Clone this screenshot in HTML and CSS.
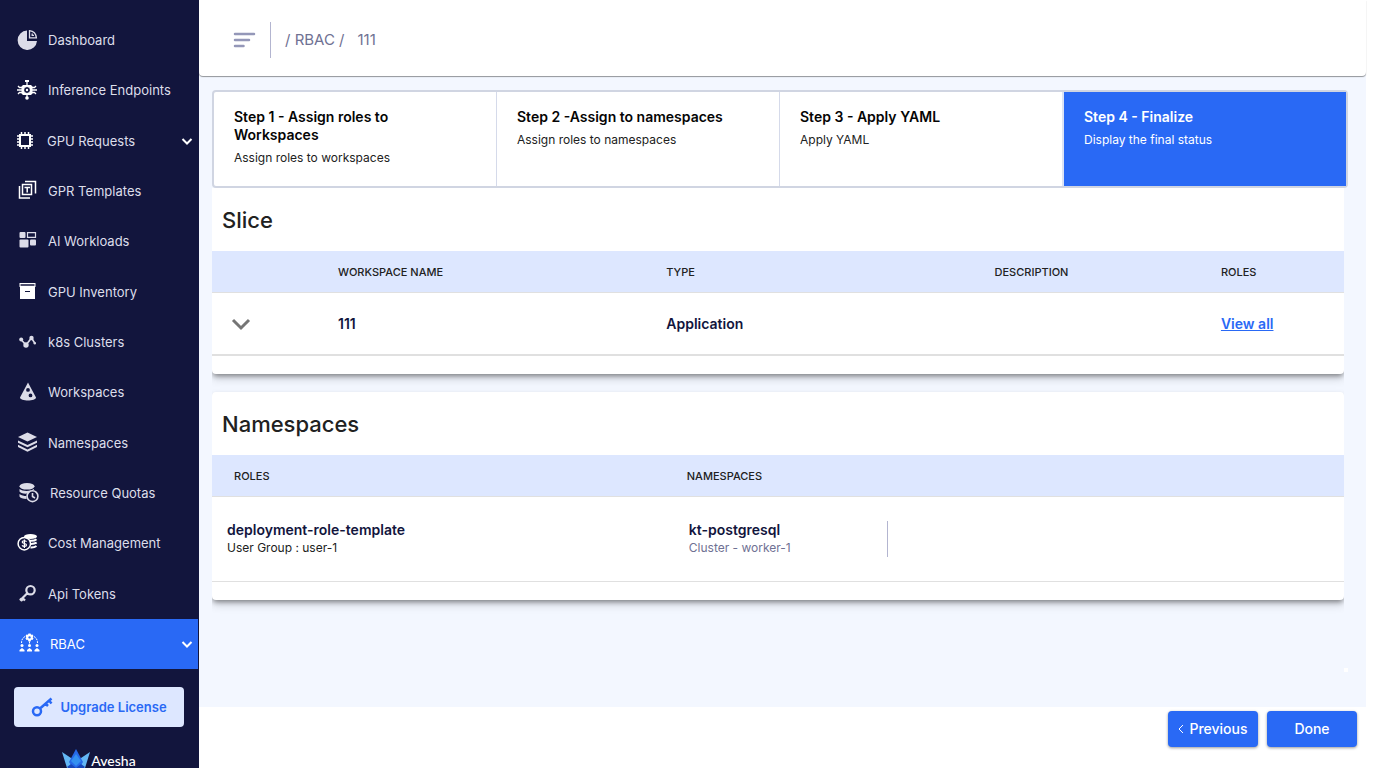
FILE: index.html
```html
<!DOCTYPE html>
<html lang="en">
<head>
<meta charset="utf-8">
<title>RBAC</title>
<link rel="stylesheet" href="styles.css">
</head>
<body>
<div class="app">
  <aside class="sidebar">
    <nav class="nav">
      <a class="nav-item" href="#"><svg class="icon dim" viewBox="0 0 22 22"><path d="M11 1.500A9.700 9.700 0 1 0 21 12H11z"/><path class="line" stroke-width="1.300" d="M13.500 1.600V8.900H20.400C20 4.500 17.500 2 13.500 1.600zM16.200 4.500V6.300H18"/></svg><span>Dashboard</span></a>
      <a class="nav-item" href="#"><svg class="icon" viewBox="0 0 22 22"><rect x="9" y="1" width="4" height="2"/><circle cx="11" cy="19" r="1.800"/><path class="line" stroke-width="1.300" d="M11 3v3M11 16v3M6 8.500H3.500L2 7M6 11H1M6 13.500H3.500L2 15M16 8.500h2.500L20 7M16 11h5M16 13.500h2.500L20 15"/><path fill-rule="evenodd" d="M7 6h8l1.500 1.500v7L15 16H7l-1.500-1.500v-7zM11 7.800l1 .8 1.400.2.1 1.400.7.8-.7.900-.1 1.300-1.400.2-1 .8-1-.8-1.400-.2-.1-1.300-.7-.9.7-.8.1-1.400 1.400-.2z"/><circle cx="11" cy="11" r="1.200"/></svg><span>Inference Endpoints</span></a>
      <a class="nav-item tight" href="#"><svg class="icon" viewBox="0 0 22 22"><path class="line" stroke-width="2" d="M4 5h10v11h-10z"/><path class="line" stroke-width="1.500" d="M5.500 2v3M9 2v3M12.500 2v3M5.500 16v3M9 16v3M12.500 16v3M1 6h3M1 9h3M1 12h3M1 15h3M14 6h3M14 9h3M14 12h3M14 15h3"/></svg><span>GPU Requests</span><svg class="chev" viewBox="0 0 12 12"><path d="M1.500 4l4.500 4.500L10.500 4"/></svg></a>
      <a class="nav-item" href="#"><svg class="icon" viewBox="0 0 22 22"><path class="line" stroke-width="1.500" d="M6.500 4.500h9v10h-9zM9 1.500H19.500V13.500M3.500 6V18H14"/><path class="line" stroke-width="1.500" d="M8.500 7.500h5.500M11.200 7.500v5"/></svg><span>GPR Templates</span></a>
      <a class="nav-item" href="#"><svg class="icon dim" viewBox="0 0 22 22"><rect x="3.500" y="2" width="6" height="6" rx="1"/><rect x="3.500" y="9.500" width="9" height="8" rx="1"/><rect x="14" y="9.500" width="6" height="6" rx="1"/><path class="line" stroke-width="1.200" d="M11.500 2.700h8v4.600h-8z"/></svg><span>AI Workloads</span></a>
      <a class="nav-item" href="#"><svg class="icon" viewBox="0 0 22 22"><path fill-rule="evenodd" d="M3.500 2h16v4h-16zM4.500 3.300v1.400h14V3.300z"/><path fill-rule="evenodd" d="M4 6h15v12h-15zM9 10v1h5v-1z"/></svg><span>GPU Inventory</span></a>
      <a class="nav-item" href="#"><svg class="icon dim" viewBox="0 0 22 22"><path class="line" stroke-width="1.600" d="M5 8.500l5 5.500L15.500 7l3.500 5.500"/><circle cx="5.200" cy="8.500" r="2"/><circle cx="10" cy="14" r="2.700"/><circle cx="15.500" cy="7" r="2.200"/><circle cx="18.800" cy="12.300" r="1.200"/></svg><span>k8s Clusters</span></a>
      <a class="nav-item" href="#"><svg class="icon dim" viewBox="0 0 22 22"><path fill-rule="evenodd" d="M12 1.500L4 16.500C4 20.500 20 20.500 20 16.500zM12 7a1.900 1.900 0 1 1 0 3.800a1.900 1.900 0 1 1 0-3.800zM14.500 12.500a1.900 1.900 0 1 1 0 3.800a1.900 1.900 0 1 1 0-3.800z"/></svg><span>Workspaces</span></a>
      <a class="nav-item" href="#"><svg class="icon dim" viewBox="0 0 22 22"><path d="M11.500 0.500L2 5 11.500 9.500l9.500-4.500z"/><path d="M2 8.500L11.500 13l9.500-4.500v2.200L11.500 15.300l-9.500-4.600z"/><path d="M2 12.800L11.500 17.400l9.500-4.600v2.200L11.500 19.700l-9.500-4.700z"/></svg><span>Namespaces</span></a>
      <a class="nav-item loose" href="#"><svg class="icon dim" viewBox="0 0 22 22"><ellipse cx="8" cy="4.300" rx="7.500" ry="3.300"/><path d="M.5 7c3 2.500 11 2.500 14.500 0v1c-4 .5-6 2-6.500 3.500C5 12 1 11 .5 9.500zM.5 12c2 1.500 4.500 2 7 2v3C4 17 1 16 .5 14.500z"/><path class="line" stroke-width="1.600" d="M13.500 8.800a5.400 5.400 0 1 1 0 10.800a5.400 5.400 0 1 1 0-10.800zM13.500 11v3.500l2.500 1.500"/></svg><span>Resource Quotas</span></a>
      <a class="nav-item" href="#"><svg class="icon" viewBox="0 0 22 22"><ellipse cx="14.500" cy="4.500" rx="6.500" ry="2.500"/><path class="line" stroke-width="2" d="M13.500 8.800c3 .2 6-.5 7-1.500M15 12c2.500 0 4.500-.6 5.700-1.300M14.500 15.500c3 .2 5-.7 6-1.500"/><path class="line" stroke-width="1.500" d="M8.300 5.500a6.200 6.200 0 1 1 0 12.400a6.200 6.200 0 1 1 0-12.400z"/><path class="line" stroke-width="1.200" d="M10.500 9.700c-.8-1.300-4.300-1.300-4.300.3 0 2 4.300 1 4.300 3 0 1.700-3.500 1.700-4.500.3M8.400 7.600v8.400"/></svg><span>Cost Management</span></a>
      <a class="nav-item" href="#"><svg class="icon dim" viewBox="0 0 22 22"><path class="line" stroke-width="2.200" d="M14.500 3a4.200 4.200 0 1 1 0 8.400a4.200 4.200 0 1 1 0-8.400zM11.500 10L4 17.500M6.500 15l2.500 2.500M4 15.500l2.500 2.500"/></svg><span>Api Tokens</span></a>
      <a class="nav-item loose active" href="#"><svg class="icon" viewBox="0 0 22 22"><path fill-rule="evenodd" d="M9.500 .5h2l.6 1.200 1.400-.3 1 1.600-.8 1.200.8 1.300-1 1.500-1.400-.2L11.500 8.500h-2l-.6-1.700-1.400.2-1-1.500.8-1.300-.8-1.200 1-1.600 1.400.3zM10.500 3.200a1.200 1.200 0 1 0 .1 0z"/><path class="line" stroke-dasharray="2 1" stroke-width="1" d="M6 3.500C3.500 5 2.500 7 2.500 10M15 3.500C17.500 5 18.500 7 18.500 10M10.500 8.500v3"/><circle cx="3" cy="12.500" r="1.500"/><circle cx="10.500" cy="12.500" r="1.500"/><circle cx="18" cy="12.500" r="1.500"/><path d="M.5 18.500v-1.500L3 15l2.500 2v1.500zM8 18.500v-1.500l2.500-2 2.500 2v1.500zM15.500 18.500v-1.500l2.500-2 2.500 2v1.500z"/></svg><span>RBAC</span><svg class="chev" viewBox="0 0 12 12"><path d="M1.500 4l4.500 4.500L10.500 4"/></svg></a>
    </nav>
    <div class="sidebar-foot">
      <button class="upgrade" type="button"><svg viewBox="0 0 22 20"><path d="M6 10.200a4 4 0 1 1 0 8a4 4 0 1 1 0-8zM9 11.500L20.500 1.500M14.500 6.500l2.500 2.500M18 3.500l2.500 3"/></svg>Upgrade License</button>
      <div class="brand"><svg viewBox="0 0 28 26"><path fill="#63b7f5" d="M0 3l9 6 2 14-6-4zM28 3l-9 6-2 14 6-4z"/><path fill="#2668e8" d="M14 0L7 13l7 11 7-11z"/><path fill="#3390f0" d="M14 5L9 12l5 5 5-5z"/><path fill="#1746b8" d="M5 18l9 8 9-8-4-3-5 4-5-4z"/></svg><span>Avesha</span></div>
    </div>
  </aside>
  <div class="page">
    <header class="topbar">
      <button class="menu" type="button" aria-label="Toggle menu"><svg viewBox="0 0 24 18"><path d="M3 3h19M3 9h14M3 15h8.500"/></svg></button>
      <div class="crumbs"><span>/ <a href="#">RBAC</a> /</span><span>111</span></div>
    </header>
    <main class="content">
      <ol class="steps">
        <li class="step"><h3>Step 1 - Assign roles to Workspaces</h3><p>Assign roles to workspaces</p></li>
        <li class="step"><h3>Step 2 -Assign to namespaces</h3><p>Assign roles to namespaces</p></li>
        <li class="step"><h3>Step 3 - Apply YAML</h3><p>Apply YAML</p></li>
        <li class="step current"><h3>Step 4 - Finalize</h3><p>Display the final status</p></li>
      </ol>
      <div class="cards">
        <section class="card joined">
          <h2>Slice</h2>
          <table class="slice">
            <thead><tr><th class="c-toggle"></th><th class="c-wide">Workspace name</th><th class="c-wide">Type</th><th class="c-desc">Description</th><th>Roles</th></tr></thead>
            <tbody><tr><td><button class="expand" type="button" aria-label="Expand row"><svg viewBox="0 0 20 14"><path d="M2 3l8 8 8-8"/></svg></button></td><td>111</td><td>Application</td><td></td><td><a href="#">View all</a></td></tr></tbody>
          </table>
        </section>
        <section class="card">
          <h2>Namespaces</h2>
          <table class="names">
            <thead><tr><th class="c-role">Roles</th><th>Namespaces</th></tr></thead>
            <tbody><tr><td class="role"><strong>deployment-role-template</strong><p>User Group : user-1</p></td><td class="ns"><div class="ns-item"><strong>kt-postgresql</strong><p>Cluster - worker-1</p></div></td></tr></tbody>
          </table>
        </section>
      </div>
    </main>
    <footer class="actions">
      <button class="btn" type="button"><svg viewBox="0 0 6 10"><path d="M5 1L1 5l4 4"/></svg>Previous</button>
      <button class="btn" type="button">Done</button>
    </footer>
  </div>
</div>
</body>
</html>
```

FILE: styles.css
```css
* { box-sizing: border-box; }
body, h2, h3, p, ol { margin: 0; padding: 0; }
body {
  font-family: Inter, "Liberation Sans", sans-serif;
  font-size: 13px;
  line-height: 18px;
  color: #212121;
  background: #fff;
}
button { font: inherit; border: 0; background: none; padding: 0; cursor: pointer; }
a { color: inherit; text-decoration: none; }
svg { flex: none; display: block; }

.app { display: flex; height: 100vh; padding: 0 32px 14px 0; }

.sidebar { flex: 0 0 199px; display: flex; flex-direction: column; background: #12153d; overflow: hidden; }
.nav { flex: 1; display: flex; flex-direction: column; justify-content: space-between; padding: 15px 1px 0 0; }
.nav-item { flex: 0 0 50px; display: flex; align-items: center; gap: 10px; padding: 0 5px 0 16px; color: #dddeea; }
.nav-item.tight { gap: 9px; }
.nav-item.loose { padding-left: 19px; gap: 9px; }
.nav-item.active { background: #2969f5; color: #fff; }
.icon { width: 22px; height: 22px; fill: #fff; }
.icon.dim { fill: #dcdce8; }
.icon .line { fill: none; stroke: #fff; }
.icon.dim .line { stroke: #dcdce8; }
.chev { width: 12px; height: 12px; margin-left: auto; fill: none; stroke: #fff; stroke-width: 2; }

.sidebar-foot { flex: 0 0 99px; padding: 18px 15px 0 14px; overflow: hidden; }
.upgrade {
  width: 100%; height: 40px; display: flex; align-items: center; justify-content: center; gap: 7px;
  background: #dde7ff; color: #2969f5; border-radius: 4px; font-weight: 600;
}
.upgrade svg { width: 22px; height: 20px; fill: none; stroke: #2969f5; stroke-width: 2.500; }
.brand { display: flex; justify-content: center; gap: 1px; margin-top: 22px; color: #fff; font: 500 14px/24px Lato, sans-serif; }
.brand svg { width: 28px; height: 26px; }

.page { flex: 1; min-width: 0; display: flex; flex-direction: column; background: #f3f7ff; }
.topbar {
  flex: 0 0 76px; display: flex; align-items: center; padding: 4px 0 0 33px; background: #fff;
  border-radius: 0 0 4px 4px; box-shadow: 0 1px 1px rgba(0, 0, 0, .4); color: #6f7193; font-size: 15px;
}
.menu { padding-right: 14px; height: 36px; border-right: 1px solid #b3b5d0; }
.menu svg { width: 24px; height: 18px; stroke: #9497b8; stroke-width: 2.500; stroke-linecap: round; }
.crumbs { display: flex; gap: 13px; padding-left: 14px; }

.content { flex: 1; min-height: 0; padding: 14px 18px 35px 13px; display: flex; flex-direction: column; }
.steps { flex: none; display: flex; min-height: 98px; list-style: none; background: #fff; border: 2px solid #d0d5e2; border-radius: 4px; }
.step { flex: 1; padding: 16px 40px 16px 20px; border-left: 1px solid #d5daea; }
.step:first-child { border-left: 0; }
.step h3 { font-size: 14px; line-height: 18px; font-weight: 600; color: #050505; }
.step p { margin-top: 5px; font-size: 12px; }
.step.current { background: #2969f5; border-left: 2px solid #dbe3f5; }
.step.current h3, .step.current p { color: #fff; }

.cards { flex: 1; position: relative; padding-right: 4px; overflow: hidden; }
.cards::after { content: ""; position: absolute; right: 0; bottom: 0; width: 4px; height: 4px; background: #fff; }
.card { background: #fff; border-radius: 4px; padding-bottom: 18px; margin-bottom: 18px; clip-path: inset(-4px 0 -18px 0); box-shadow: 0 3px 5px -1px rgba(0, 0, 0, .4), 0 5px 10px rgba(0, 0, 0, .14); }
.card.joined { border-radius: 0 0 4px 4px; }
.card h2 { padding: 17px 10px 16px; font-size: 22px; line-height: 30px; font-weight: 500; }
table { width: 100%; border-collapse: separate; border-spacing: 0; table-layout: fixed; }
th { height: 42px; padding: 0 22px; text-align: left; text-transform: uppercase; font-size: 11px; font-weight: 500; background: #dde7ff; border-bottom: 1px solid #e0e0e0; }
td { padding: 0 22px; }
.slice td { height: 63px; border-bottom: 2px solid #e0e0e0; color: #12153d; font-size: 14px; font-weight: 600; }
.slice td a { color: #2969f5; text-decoration: underline; }
.c-toggle { width: 104px; }
.c-wide { width: 29%; }
.c-desc { width: 20%; }
.c-role { width: 40%; }
.expand { display: block; margin-left: -3px; }
.expand svg { width: 20px; height: 14px; fill: none; stroke: #757575; stroke-width: 3; }
.names td { height: 85px; border-bottom: 1px solid #e0e0e0; }
.names strong { display: block; font-size: 14px; font-weight: 600; color: #12153d; }
.names p { font-size: 12px; }
.names .role { padding-left: 15px; }
.names .ns { padding-left: 24px; }
.ns-item { width: 199px; border-right: 1px solid #b3b5d0; }
.ns-item p { color: #6f7193; }

.actions { flex: 0 0 61px; display: flex; justify-content: flex-end; gap: 9px; padding: 4px 9px 0; background: #fff; }
.btn {
  width: 90px; height: 36px; display: flex; align-items: center; justify-content: center; gap: 5px;
  background: #2969f5; color: #fff; border-radius: 4px; font-size: 14px; font-weight: 500;
  box-shadow: 0 1px 3px rgba(0, 0, 0, .4);
}
.btn svg { width: 6px; height: 10px; fill: none; stroke: #fff; }
```
